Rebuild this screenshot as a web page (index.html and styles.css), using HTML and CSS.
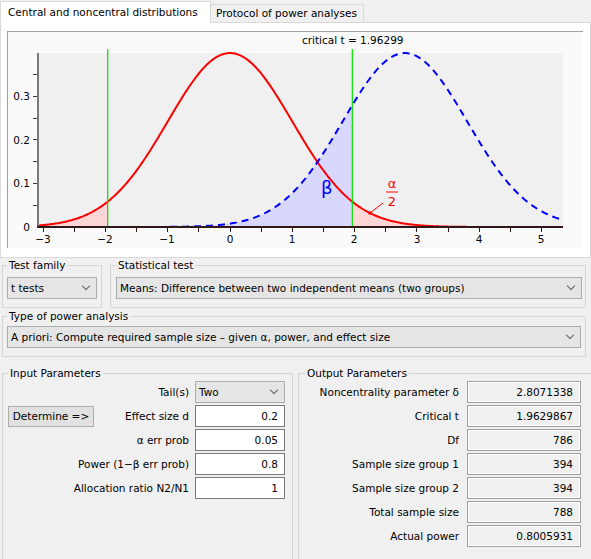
FILE: index.html
```html
<!DOCTYPE html>
<html lang="en">
<head>
    <meta charset="UTF-8">
    <title>G*Power</title>
    <link rel="stylesheet" href="styles.css">
</head>
<body>
    <div class="tabs">
        <div class="tab active">Central and noncentral distributions</div>
        <div class="tab">Protocol of power analyses</div>
    </div>
    <div class="panel">
        <div class="plot-frame">
            <svg class="plot" width="575" height="216" viewBox="8 32 575 216">
                <rect x="38" y="53" width="525" height="174" fill="#f0f0f0"/>
                <path id="blue-fill" fill="#d8d8ff"/>
                <path id="red-fill-left" fill="#ffd6d6"/>
                <path id="red-fill-right" fill="#ffd6d6"/>
                <path id="red-curve" fill="none" stroke="#ff0000" stroke-width="2"/>
                <path id="blue-curve" fill="none" stroke="#0000ff" stroke-width="2" stroke-dasharray="7 5"/>
                <g class="critical" stroke="#00e000" stroke-width="1.2">
                    <line x1="107.7" y1="49" x2="107.7" y2="227"/>
                    <line x1="352.3" y1="49" x2="352.3" y2="227"/>
                </g>

                <!-- y axis -->
                <line x1="38" y1="53" x2="38" y2="227" stroke="#7a7a7a" stroke-width="2"/>
                <g stroke="#3a3a3a">
                    <line x1="33" y1="205.5" x2="37" y2="205.5"/>
                    <line x1="33" y1="183.5" x2="37" y2="183.5"/>
                    <line x1="33" y1="161.5" x2="37" y2="161.5"/>
                    <line x1="33" y1="139.5" x2="37" y2="139.5"/>
                    <line x1="33" y1="118.5" x2="37" y2="118.5"/>
                    <line x1="33" y1="96.5" x2="37" y2="96.5"/>
                    <line x1="33" y1="74.5" x2="37" y2="74.5"/>
                </g>
                <g class="tick-label" text-anchor="end">
                    <text x="30" y="231">0</text>
                    <text x="30" y="187">0.1</text>
                    <text x="30" y="144">0.2</text>
                    <text x="30" y="100">0.3</text>
                </g>

                <!-- x axis -->
                <line x1="37" y1="227" x2="563" y2="227" stroke="#301818" stroke-width="2"/>
                <g stroke="#301818">
                    <line x1="43.5" y1="228" x2="43.5" y2="232"/>
                    <line x1="74.5" y1="228" x2="74.5" y2="232"/>
                    <line x1="105.5" y1="228" x2="105.5" y2="232"/>
                    <line x1="136.5" y1="228" x2="136.5" y2="232"/>
                    <line x1="167.5" y1="228" x2="167.5" y2="232"/>
                    <line x1="198.5" y1="228" x2="198.5" y2="232"/>
                    <line x1="230.5" y1="228" x2="230.5" y2="232"/>
                    <line x1="261.5" y1="228" x2="261.5" y2="232"/>
                    <line x1="292.5" y1="228" x2="292.5" y2="232"/>
                    <line x1="323.5" y1="228" x2="323.5" y2="232"/>
                    <line x1="354.5" y1="228" x2="354.5" y2="232"/>
                    <line x1="385.5" y1="228" x2="385.5" y2="232"/>
                    <line x1="416.5" y1="228" x2="416.5" y2="232"/>
                    <line x1="448.5" y1="228" x2="448.5" y2="232"/>
                    <line x1="479.5" y1="228" x2="479.5" y2="232"/>
                    <line x1="510.5" y1="228" x2="510.5" y2="232"/>
                    <line x1="541.5" y1="228" x2="541.5" y2="232"/>
                </g>
                <g class="tick-label" text-anchor="middle">
                    <text x="43" y="243">−3</text>
                    <text x="105" y="243">−2</text>
                    <text x="167" y="243">−1</text>
                    <text x="230" y="243">0</text>
                    <text x="292" y="243">1</text>
                    <text x="354" y="243">2</text>
                    <text x="417" y="243">3</text>
                    <text x="479" y="243">4</text>
                    <text x="541" y="243">5</text>
                </g>

                <text class="tick-label" x="302" y="44">critical t = 1.96299</text>
                <text class="beta" x="321" y="194">β</text>
                <g class="alpha">
                    <text x="392" y="188" text-anchor="middle">α</text>
                    <line x1="386" y1="192" x2="398" y2="192" stroke="#ff0000"/>
                    <text x="392" y="206" text-anchor="middle">2</text>
                    <line x1="370" y1="213" x2="383" y2="203" stroke="#ff0000"/>
                    <circle cx="370" cy="213" r="1.8" fill="#ff0000"/>
                </g>
            </svg>
        </div>
    </div>

    <div class="settings">
        <div class="settings-row">
            <fieldset class="group family">
                <legend>Test family</legend>
                <div class="select">t tests</div>
            </fieldset>
            <fieldset class="group stat-test">
                <legend>Statistical test</legend>
                <div class="select">Means: Difference between two independent means (two groups)</div>
            </fieldset>
        </div>
        <fieldset class="group analysis">
            <legend>Type of power analysis</legend>
            <div class="select">A priori: Compute required sample size – given α, power, and effect size</div>
        </fieldset>
    </div>

    <div class="params">
        <fieldset class="group input-params">
            <legend>Input Parameters</legend>
            <div class="input-grid">
                <button class="determine">Determine =&gt;</button>
                <div class="param-label">Tail(s)</div>
                <div class="select control">Two</div>
                <div class="param-label">Effect size d</div>
                <input class="field control" type="text" value="0.2">
                <div class="param-label">α err prob</div>
                <input class="field control" type="text" value="0.05">
                <div class="param-label">Power (1−β err prob)</div>
                <input class="field control" type="text" value="0.8">
                <div class="param-label">Allocation ratio N2/N1</div>
                <input class="field control" type="text" value="1">
            </div>
        </fieldset>
        <fieldset class="group output-params">
            <legend>Output Parameters</legend>
            <div class="output-grid">
                <div class="param-label">Noncentrality parameter δ</div>
                <div class="value">2.8071338</div>
                <div class="param-label">Critical t</div>
                <div class="value">1.9629867</div>
                <div class="param-label">Df</div>
                <div class="value">786</div>
                <div class="param-label">Sample size group 1</div>
                <div class="value">394</div>
                <div class="param-label">Sample size group 2</div>
                <div class="value">394</div>
                <div class="param-label">Total sample size</div>
                <div class="value">788</div>
                <div class="param-label">Actual power</div>
                <div class="value">0.8005931</div>
            </div>
        </fieldset>
    </div>

    <script>
        // draw the two distributions (df = 786, so both are close to normal)
        const X = t => 230 + 62.3 * t;
        const Y = p => 227 - 436 * p;
        const pdf = (t, m) => Math.exp(-(t - m) * (t - m) / 2) / Math.sqrt(2 * Math.PI);
        const tMin = (38 - 230) / 62.3;
        const tMax = (563 - 230) / 62.3;
        const crit = 1.96299;
        const delta = 2.8071338;

        function curve(m, a, b) {
            const n = Math.ceil((b - a) / 0.02);
            let d = '';
            for (let i = 0; i <= n; i++) {
                const t = a + (b - a) * i / n;
                d += (i ? 'L' : 'M') + X(t).toFixed(2) + ',' + Y(pdf(t, m)).toFixed(2);
            }
            return d;
        }

        function area(m, a, b) {
            return curve(m, a, b) + 'L' + X(b).toFixed(2) + ',227L' + X(a).toFixed(2) + ',227Z';
        }

        document.getElementById('blue-fill').setAttribute('d', area(delta, tMin, crit));
        document.getElementById('red-fill-left').setAttribute('d', area(0, tMin, -crit));
        document.getElementById('red-fill-right').setAttribute('d', area(0, crit, tMax));
        document.getElementById('red-curve').setAttribute('d', curve(0, tMin, tMax));
        document.getElementById('blue-curve').setAttribute('d', curve(delta, tMin, tMax));
    </script>
</body>
</html>
```

FILE: styles.css
```css
body {
    margin: 0;
    width: 591px;
    height: 559px;
    overflow: hidden;
    background: #f0f0f0;
    font-family: "DejaVu Sans", sans-serif;
    font-size: 10.5px;
    color: #000;
}

/* tabs */
.tabs {
    display: flex;
    align-items: flex-end;
    height: 22px;
}
.tab {
    box-sizing: border-box;
    height: 18px;
    width: 154px;
    margin-left: -1px;
    padding: 1px 0 0 5px;
    line-height: 15px;
    background: #f0f0f0;
    border: 1px solid #d9d9d9;
    border-bottom: none;
}
.tab.active {
    position: relative;
    z-index: 1;
    width: 211px;
    height: 22px;
    margin-left: 0;
    margin-bottom: -1px;
    padding: 3px 0 0 7px;
    background: #fff;
}

.panel {
    box-sizing: border-box;
    height: 236px;
    padding: 8px 0 0 6px;
    background: #fff;
    border: 1px solid #d9d9d9;
}
.plot-frame {
    box-sizing: border-box;
    width: 576px;
    height: 217px;
    background: #fafafa;
    border-top: 1px solid #a0a0a0;
    border-left: 1px solid #a0a0a0;
}
.plot {
    display: block;
}
.tick-label {
    font-family: "DejaVu Sans", sans-serif;
    font-size: 10.5px;
    fill: #000;
}
.beta {
    font-family: "DejaVu Sans", sans-serif;
    font-size: 18px;
    fill: #0000ff;
}
.alpha text {
    font-family: "DejaVu Sans", sans-serif;
    font-size: 13px;
    fill: #ff0000;
}

/* group boxes */
.group {
    box-sizing: border-box;
    min-width: 0;
    margin: 0;
    padding: 0 4px 8px;
    border: 1px solid #d5d5d5;
}
.group legend {
    padding: 0 2px;
    line-height: 15px;
}

.settings {
    padding: 0 5px 0 2px;
}
.settings-row {
    display: flex;
    gap: 8px;
}
.family {
    width: 100px;
}
.stat-test {
    flex: 1;
    padding: 0 3px 8px 5px;
}
.family .select,
.stat-test .select {
    margin-top: 4px;
}
.analysis {
    margin-top: 1px;
}
.analysis .select {
    margin-top: 2px;
}

.select {
    position: relative;
    box-sizing: border-box;
    height: 22px;
    padding-left: 3px;
    line-height: 20px;
    background: #e5e5e5;
    border: 1px solid #adadad;
}
.select::after {
    content: "";
    position: absolute;
    right: 7px;
    top: 5px;
    width: 5px;
    height: 5px;
    border-right: 1px solid #606060;
    border-bottom: 1px solid #606060;
    transform: rotate(45deg);
}

/* parameters */
.params {
    display: flex;
    gap: 5px;
    margin-right: -20px;
    padding: 9px 0 0 2px;
}
.input-params {
    width: 291px;
    height: 200px;
    padding: 0 7px 0 5px;
}
.output-params {
    flex: 1;
    height: 200px;
    padding: 0 0 0 6px;
}
.input-grid {
    display: grid;
    grid-template-columns: 86px 89px 90px;
    grid-auto-rows: 22px;
    column-gap: 6px;
    row-gap: 2px;
    align-items: center;
}
.output-grid {
    display: grid;
    grid-template-columns: 154px 114px;
    grid-auto-rows: 22px;
    column-gap: 8px;
    row-gap: 2px;
    align-items: center;
}
.param-label {
    grid-column: 2;
    justify-self: end;
    text-align: right;
    white-space: nowrap;
}
.output-grid .param-label {
    grid-column: 1;
}
.control {
    grid-column: 3;
}
.determine {
    grid-column: 1;
    grid-row: 2;
    box-sizing: border-box;
    width: 86px;
    height: 21px;
    padding: 0;
    font: inherit;
    color: #000;
    background: #e1e1e1;
    border: 1px solid #adadad;
}
.field {
    box-sizing: border-box;
    width: 90px;
    height: 22px;
    margin: 0;
    padding: 0 6px 0 0;
    font: inherit;
    color: #000;
    text-align: right;
    background: #fff;
    border: 1px solid #7a7a7a;
}
.value {
    box-sizing: border-box;
    height: 22px;
    padding-right: 7px;
    line-height: 20px;
    text-align: right;
    background: #f0f0f0;
    border: 1px solid #a0a0a0;
    box-shadow: inset 0 0 0 1px #fff;
}
```
